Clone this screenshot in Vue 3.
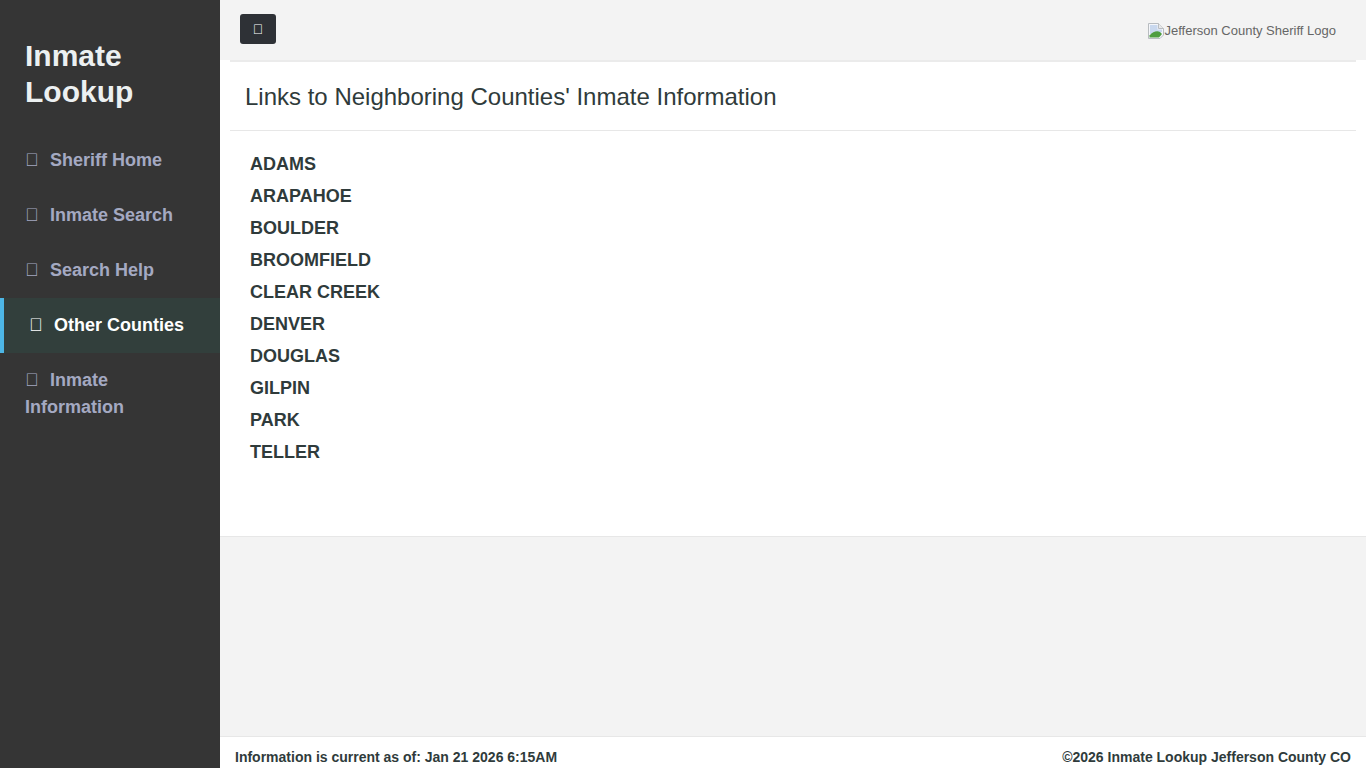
<script setup>
const navItems = [
  { label: 'Sheriff Home', icon: '\uf015' },
  { label: 'Inmate Search', icon: '\uf002' },
  { label: 'Search Help', icon: '\uf059' },
  { label: 'Other Counties', icon: '\uf0ac', active: true },
  { label: 'Inmate Information', icon: '\uf05a' },
]
const counties = ['ADAMS', 'ARAPAHOE', 'BOULDER', 'BROOMFIELD', 'CLEAR CREEK', 'DENVER', 'DOUGLAS', 'GILPIN', 'PARK', 'TELLER']
</script>

<template>
  <div class="layout">
    <aside class="sidebar">
      <h1 class="brand">Inmate Lookup</h1>
      <nav class="nav">
        <a v-for="item in navItems" :key="item.label" class="nav-item" :class="{ active: item.active }" href="#">
          <span class="nav-icon">{{ item.icon }}</span>{{ item.label }}
        </a>
      </nav>
    </aside>
    <div class="main">
      <header class="topbar">
        <button class="toggle" type="button"><span>{{ '\uf0c9' }}</span></button>
        <div class="logo">
          <svg class="broken" width="16" height="16" viewBox="0 0 16 16">
            <path d="M0.5 0.5H10.5L15.5 5.5V12L12 15.5H0.5Z" fill="#f4f6fa" stroke="#b8bcc0" />
            <path d="M10.5 0.5V5.5H15.5" fill="#e8e8e8" stroke="#b8bcc0" />
            <path d="M2 2H9.5V6.5H14V9L2 11Z" fill="#c9d8ee" />
            <path d="M1.5 14.5V12.5C5 8.5 9 7.5 12 9L14 11L11 14.5Z" fill="#4e9d3f" />
          </svg><span>Jefferson County Sheriff Logo</span>
        </div>
      </header>
      <section class="content">
        <div class="panel">
          <h2 class="panel-title">Links to Neighboring Counties' Inmate Information</h2>
          <ul class="county-list">
            <li v-for="c in counties" :key="c"><a href="#">{{ c }}</a></li>
          </ul>
        </div>
      </section>
      <div class="spacer"></div>
      <footer class="footer">
        <span>Information is current as of: Jan 21 2026 6:15AM</span>
        <span>©2026 Inmate Lookup Jefferson County CO</span>
      </footer>
    </div>
  </div>
</template>

<style>
html, body { margin: 0; padding: 0; }
</style>

<style scoped>
.layout {
  display: flex;
  height: 768px;
  font-family: "Liberation Sans", Arial, sans-serif;
  color: #2f3b3b;
  overflow: hidden;
}
.sidebar {
  width: 220px;
  flex: none;
  background: #353535;
}
.brand {
  margin: 0;
  padding: 38px 25px 23px;
  font-size: 30px;
  line-height: 36px;
  font-weight: 700;
  color: #ecf0f1;
}
.nav { display: flex; flex-direction: column; }
.nav-item {
  display: block;
  padding: 14px 25px;
  font-size: 18px;
  line-height: 27px;
  font-weight: 700;
  color: #a4a9c2;
  text-decoration: none;
}
.nav-item.active {
  color: #fff;
  background: #323f3c;
  border-left: 4px solid #4db6e6;
}
.nav-icon {
  display: inline-block;
  width: 25px;
  font-size: 18px;
  line-height: 1;
  font-weight: 400;
}
.main {
  flex: 1;
  min-width: 0;
  display: flex;
  flex-direction: column;
  background: #f3f3f3;
}
.topbar {
  height: 60px;
  flex: none;
  display: flex;
  align-items: center;
  justify-content: space-between;
  padding: 0 30px 2px 20px;
  box-sizing: border-box;
  background: #f3f3f3;
}
.toggle {
  width: 36px;
  height: 30px;
  padding: 0;
  border: 0;
  border-radius: 3px;
  background: #2e3136;
  color: #fff;
  font: 400 14px "Liberation Sans", Arial, sans-serif;
}
.logo {
  display: flex;
  align-items: center;
  margin-top: 3px;
  font-size: 13px;
  line-height: 20px;
  color: #666;
}
.broken { flex: none; }
.content {
  height: 477px;
  flex: none;
  box-sizing: border-box;
  background: #fff;
  border-bottom: 1px solid #e7e7e7;
  padding: 0 10px;
}
.panel { border-top: 2px solid #ebebeb; }
.panel-title {
  margin: 0;
  padding: 19px 15px 17px;
  font-size: 24px;
  line-height: 32px;
  font-weight: 400;
  color: #2f3b3b;
  border-bottom: 1px solid #e7e7e7;
}
.county-list {
  list-style: none;
  margin: 0;
  padding: 17px 20px 0;
}
.county-list li { height: 32px; line-height: 32px; }
.county-list a {
  font-size: 18px;
  font-weight: 700;
  color: #2f3b3b;
  text-decoration: none;
}
.spacer { flex: 1; }
.footer {
  height: 32px;
  flex: none;
  box-sizing: border-box;
  display: flex;
  justify-content: space-between;
  align-items: center;
  padding: 8px 15px 0;
  background: #fff;
  border-top: 1px solid #e7e7e7;
  font-size: 14px;
  font-weight: 700;
}
</style>
